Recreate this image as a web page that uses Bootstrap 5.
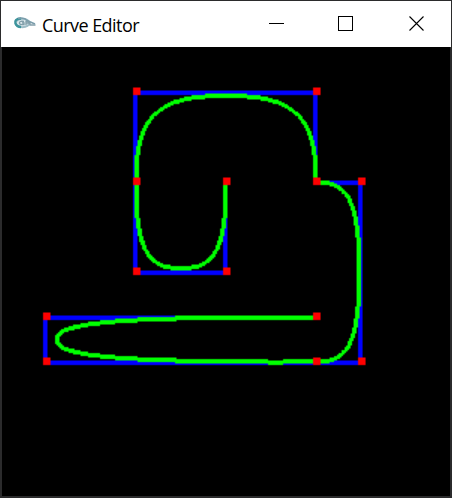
<!DOCTYPE html>
<html lang="en">
<head>
<meta charset="utf-8">
<meta name="viewport" content="width=device-width, initial-scale=1">
<title>Curve Editor</title>
<link href="https://cdn.jsdelivr.net/npm/bootstrap@5.3.0/dist/css/bootstrap.min.css" rel="stylesheet">
<style>
  body { background: #2b2b2c; }
  .app-window { width: 452px; height: 498px; padding: 1px 1px 2px; }
  .title-bar { height: 46px; background: #fff; color: #000; padding-left: 12px; }
  .app-icon { width: 24px; height: 16px; margin-top: -3px; }
  .app-title { font: 18px/24px "Open Sans", "Noto Sans", sans-serif; margin-left: 5px; letter-spacing: -.56px; white-space: nowrap; padding-top: 1px; }
  .win-button { width: 70px; height: 46px; color: #000; }
  .win-maximize svg { margin-right: 2px; }
  .win-controls { margin-right: -1px; }
  .drawing-area { height: 449px; margin: 0 1px; background: #000; }
  .drawing-area canvas { display: block; width: 450px; height: 450px; margin-left: -1px; }
</style>
</head>
<body class="m-0 overflow-hidden">
<main class="app-window overflow-hidden">
  <header class="title-bar d-flex align-items-center">
    <svg class="app-icon flex-shrink-0" viewBox="0 0 24 16" fill="none" aria-hidden="true">
      <ellipse cx="9.500" cy="8" rx="7" ry="4.200" fill="#dbe8ec" stroke="#9dbcc6" stroke-width="2"/>
      <path d="M8 3.500C3 3.600 1.500 6 2.500 8.500C3.500 11 5 12 8 12" stroke="#3c949c" stroke-width="2.400"/>
      <path d="M5 3.500Q11 2 14 5.500L22 9" stroke="#7b9dab" stroke-width="1.600"/>
      <path d="M11 6.500Q6 5.500 6.500 8.500Q7 10 11 9.500V8H9M13 10V6.500Q16 6 16 8H13M17 7V10H22.500" stroke="#829faa" stroke-width="1.300"/>
    </svg>
    <h1 class="app-title mb-0">Curve Editor</h1>
    <div class="win-controls d-flex ms-auto">
      <button class="win-button btn p-0 border-0 rounded-0 d-flex align-items-center justify-content-center" aria-label="Minimize">
        <svg width="16" height="16" stroke="currentColor" shape-rendering="crispEdges"><path d="M0 7.500H15"/></svg>
      </button>
      <button class="win-button win-maximize btn p-0 border-0 rounded-0 d-flex align-items-center justify-content-center" aria-label="Maximize">
        <svg width="16" height="16" fill="none" stroke="currentColor" shape-rendering="crispEdges"><path d="M.5 .5H14.500V14.500H.5Z"/></svg>
      </button>
      <button class="win-button btn p-0 border-0 rounded-0 d-flex align-items-center justify-content-center" aria-label="Close">
        <svg width="16" height="16" fill="none" stroke="currentColor"><path d="M.5 .5L14.500 14.500M14.500 .5L.5 14.500" stroke-width="1.100"/></svg>
      </button>
    </div>
  </header>
  <section class="drawing-area overflow-hidden">
    <canvas id="curve" width="300" height="300"></canvas>
  </section>
</main>
<script src="https://cdn.jsdelivr.net/npm/bootstrap@5.3.0/dist/js/bootstrap.bundle.min.js"></script>
<script>
const ctx = document.getElementById('curve').getContext('2d');
const points = [
  [150, 90], [150, 150], [90, 150], [90, 90], [90, 30], [210, 30], [210, 90],
  [240, 90], [240, 210], [210, 210], [30, 210], [30, 180], [210, 180]
];
const STEPS = 60;

// Three-pixel-wide aliased line, widened along its minor axis.
function line(x0, y0, x1, y1) {
  const dx = x1 - x0, dy = y1 - y0;
  const flat = Math.abs(dx) >= Math.abs(dy);
  const n = Math.max(1, Math.ceil(Math.max(Math.abs(dx), Math.abs(dy))));
  for (let i = 0; i <= n; i++) {
    const x = Math.floor(x0 + dx * i / n), y = Math.floor(y0 + dy * i / n);
    if (flat) ctx.fillRect(x, y - 1, 1, 3);
    else ctx.fillRect(x - 1, y, 3, 1);
  }
}

ctx.fillStyle = '#00f';
for (let i = 1; i < points.length; i++) {
  const [ax, ay] = points[i - 1], [bx, by] = points[i];
  line(ax - 1, ay, bx - 1, by);
}

// Symmetric arch from p[0] to p[3]; u runs along the base, v towards the outer edge.
function evaluate(p, t) {
  const mirrored = t > .5;
  const q = mirrored ? 2 - 2 * t : 2 * t, s = 1 - q;
  const half = 3 * s * q * q * .112 + q * q * q * .5;
  const u = mirrored ? 1 - half : half;
  const v = 3 * s * s * q * .725 + 3 * s * q * q * .96 + q * q * q * .96;
  return [0, 1].map(k => p[0][k] + u * (p[3][k] - p[0][k]) + v * (p[1][k] - p[0][k]));
}

ctx.fillStyle = '#0f0';
for (let k = 0; k + 3 < points.length; k += 3) {
  const p = points.slice(k, k + 4);
  let prev = evaluate(p, .0003);
  for (let i = 1; i <= STEPS; i++) {
    const next = evaluate(p, Math.min(i / STEPS, .9997));
    line(...prev, ...next);
    prev = next;
  }
}
// The long lower edge dips by one pixel here.
ctx.clearRect(178, 208, 10, 1);
ctx.fillRect(178, 209, 10, 3);

ctx.fillStyle = '#f00';
for (const [x, y] of points) ctx.fillRect(x - 2, y - 3, 5, 5);
</script>
</body>
</html>
